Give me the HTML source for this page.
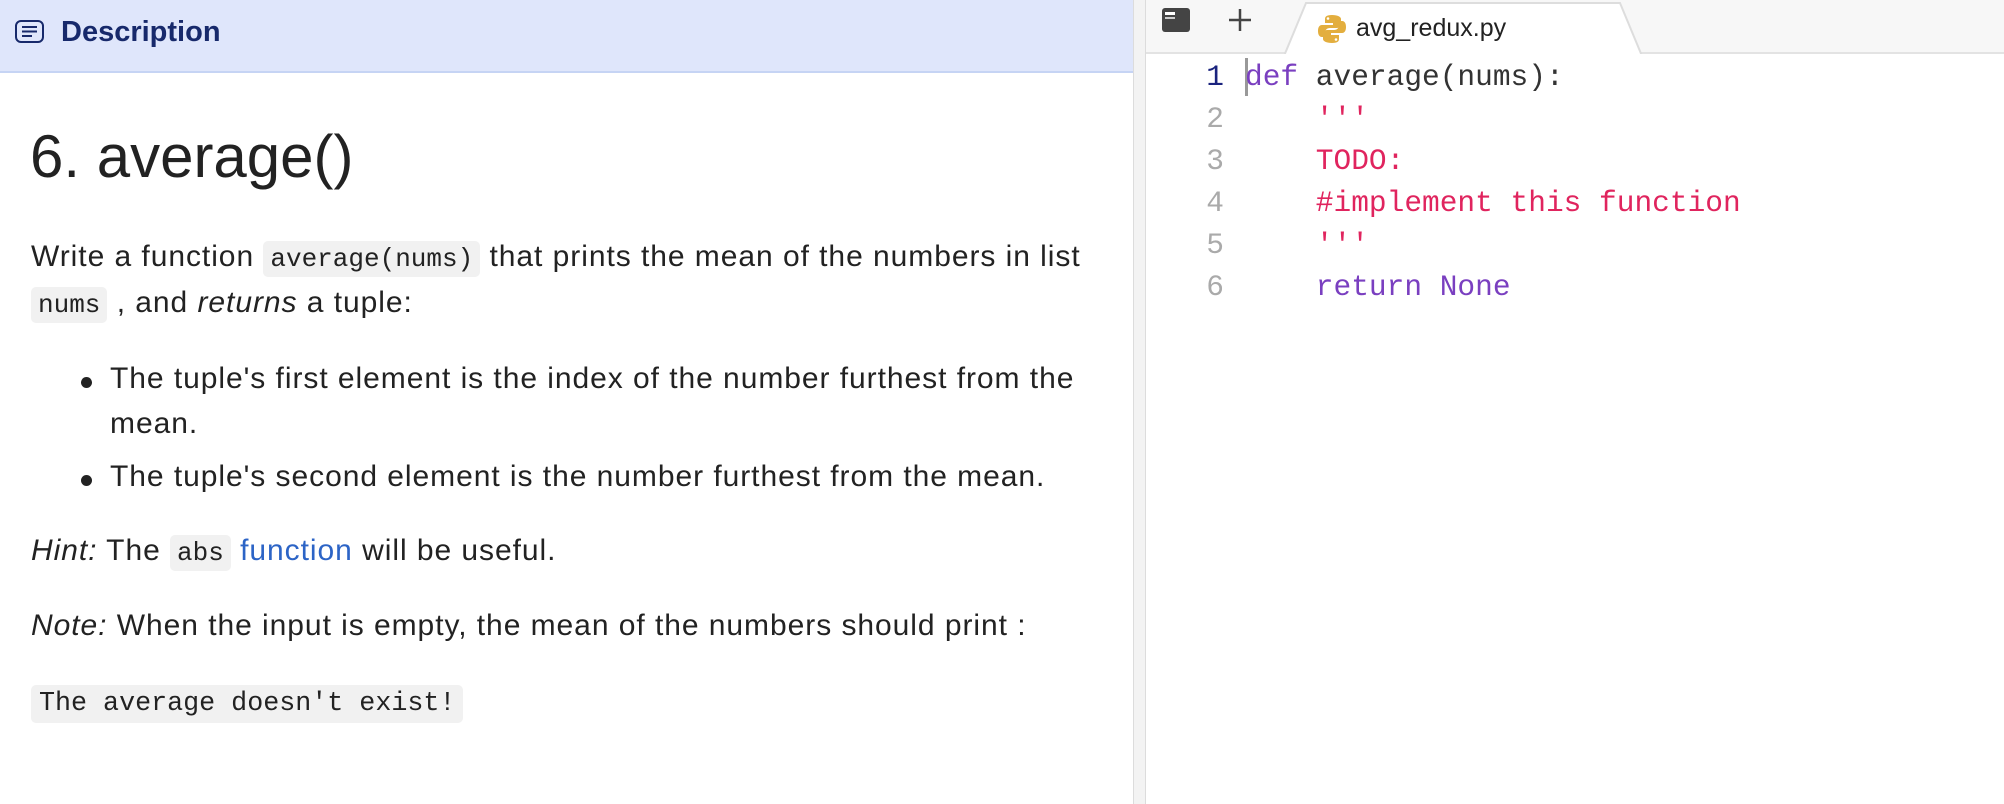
<!DOCTYPE html>
<html><head><meta charset="utf-8">
<style>
*{margin:0;padding:0;box-sizing:border-box}
body{width:2004px;height:804px;overflow:hidden;background:#fff;font-family:"Liberation Sans",sans-serif;color:#222;position:relative}
#left{position:absolute;left:0;top:0;width:1133px;height:804px;background:#fff}
#hdr{height:73px;background:#dfe6fb;border-bottom:2px solid #c6d4f4;position:relative}
#hdr .t{position:absolute;left:61px;top:16px;font-size:29px;font-weight:bold;color:#17296b}
#sep{position:absolute;left:1133px;top:0;width:13px;height:804px;background:#f3f3f3;border-left:1px solid #dcdcdc;border-right:1px solid #dcdcdc}
h1{position:absolute;left:30px;top:122px;font-size:60px;font-weight:normal;color:#222}
.p{position:absolute;left:31px;font-size:30px;letter-spacing:0.95px;color:#222;white-space:nowrap}
code{font-family:"Liberation Mono",monospace;font-size:26px;letter-spacing:0;background:#f1f1f1;border-radius:5px;padding:3px 7px}
.dot{position:absolute;left:81px;width:11px;height:11px;border-radius:50%;background:#222}
#tabs{position:absolute;left:1146px;top:0;width:858px;height:54px;background:#f7f7f7;border-bottom:2px solid #e3e3e3}
#ed{position:absolute;left:1146px;top:54px;width:858px;height:750px;background:#fff;font-family:"Liberation Mono",monospace;font-size:29.5px}
.ln{position:absolute;left:0;width:78px;text-align:right;color:#aaa}
.cl{position:absolute;left:99px;white-space:pre;color:#333}
.kw{color:#7a3fc0}.st{color:#e0245e}
</style></head><body>
<div id="left">
 <div id="hdr">
  <svg style="position:absolute;left:15px;top:20px" width="29" height="23" viewBox="0 0 29 23"><rect x="1" y="1" width="27" height="21" rx="5" fill="none" stroke="#17296b" stroke-width="2"/><path d="M7 7h15M7 11.5h15M7 16h10" stroke="#17296b" stroke-width="2"/></svg>
  <div class="t">Description</div>
 </div>
 <h1>6. average()</h1>
 <div class="p" style="top:240px">Write a function <code>average(nums)</code> that prints the mean of the numbers in list</div>
 <div class="p" style="top:286px"><code>nums</code> , and <i>returns</i> a tuple:</div>
 <div class="dot" style="top:377px"></div>
 <div class="p" style="left:110px;top:362px">The tuple's first element is the index of the number furthest from the</div>
 <div class="p" style="left:110px;top:407px">mean.</div>
 <div class="dot" style="top:475px"></div>
 <div class="p" style="left:110px;top:460px">The tuple's second element is the number furthest from the mean.</div>
 <div class="p" style="top:534px"><i>Hint:</i> The <code>abs</code> <span style="color:#2c64c6">function</span> will be useful.</div>
 <div class="p" style="top:609px"><i>Note:</i> When the input is empty, the mean of the numbers should print :</div>
 <div class="p" style="top:684px"><code style="padding:4px 8px;font-size:26.7px">The average doesn't exist!</code></div>
</div>
<div id="sep"></div>
<div id="tabs">
 <svg style="position:absolute;left:16px;top:8px" width="28" height="24" viewBox="0 0 28 24"><rect x="0" y="0" width="28" height="24" rx="3" fill="#444"/><rect x="3" y="4" width="10" height="3" fill="#fff"/><rect x="3" y="9" width="10" height="2" fill="#ccc"/></svg>
 <svg style="position:absolute;left:82px;top:9px" width="24" height="22" viewBox="0 0 24 22"><path d="M12 0v22M1 11h22" stroke="#444" stroke-width="2.5"/></svg>
 <svg style="position:absolute;left:138px;top:2px" width="362" height="54" viewBox="0 0 362 54"><path d="M0 54 L22 1 L336 1 L358 54" fill="#fff" stroke="#ddd" stroke-width="2"/><rect x="0" y="52" width="362" height="4" fill="#fff"/></svg>
 <svg style="position:absolute;left:172px;top:14px" width="28" height="30" viewBox="0 0 28 30"><path d="M14 1c-6 0-7 2-7 4v4h8v2H4c-3 0-4 3-4 6s1 6 4 6h3v-4c0-3 2-5 5-5h7c2 0 4-2 4-4V5c0-2-3-4-9-4z" fill="#e3ae3e"/><path d="M14 29c6 0 7-2 7-4v-4h-8v-2h11c3 0 4-3 4-6s-1-6-4-6h-3v4c0 3-2 5-5 5H9c-2 0-4 2-4 4v5c0 2 3 4 9 4z" fill="#e3ae3e"/><circle cx="10" cy="4.5" r="1.3" fill="#fff"/><circle cx="18" cy="25.5" r="1.3" fill="#fff"/></svg>
 <div style="position:absolute;left:210px;top:14px;font-size:25px;color:#222">avg_redux.py</div>
</div>
<div id="ed">
 <div style="position:absolute;left:99px;top:4px;width:3px;height:38px;background:#999"></div>
 <div class="ln" style="top:6px;color:#1a237e">1</div><div class="cl" style="top:6px"><span class="kw">def</span> average(nums):</div>
 <div class="ln" style="top:48px">2</div><div class="cl st" style="top:48px">    '''</div>
 <div class="ln" style="top:90px">3</div><div class="cl st" style="top:90px">    TODO:</div>
 <div class="ln" style="top:132px">4</div><div class="cl st" style="top:132px">    #implement this function</div>
 <div class="ln" style="top:174px">5</div><div class="cl st" style="top:174px">    '''</div>
 <div class="ln" style="top:216px">6</div><div class="cl kw" style="top:216px">    return None</div>
</div>
</body></html>
